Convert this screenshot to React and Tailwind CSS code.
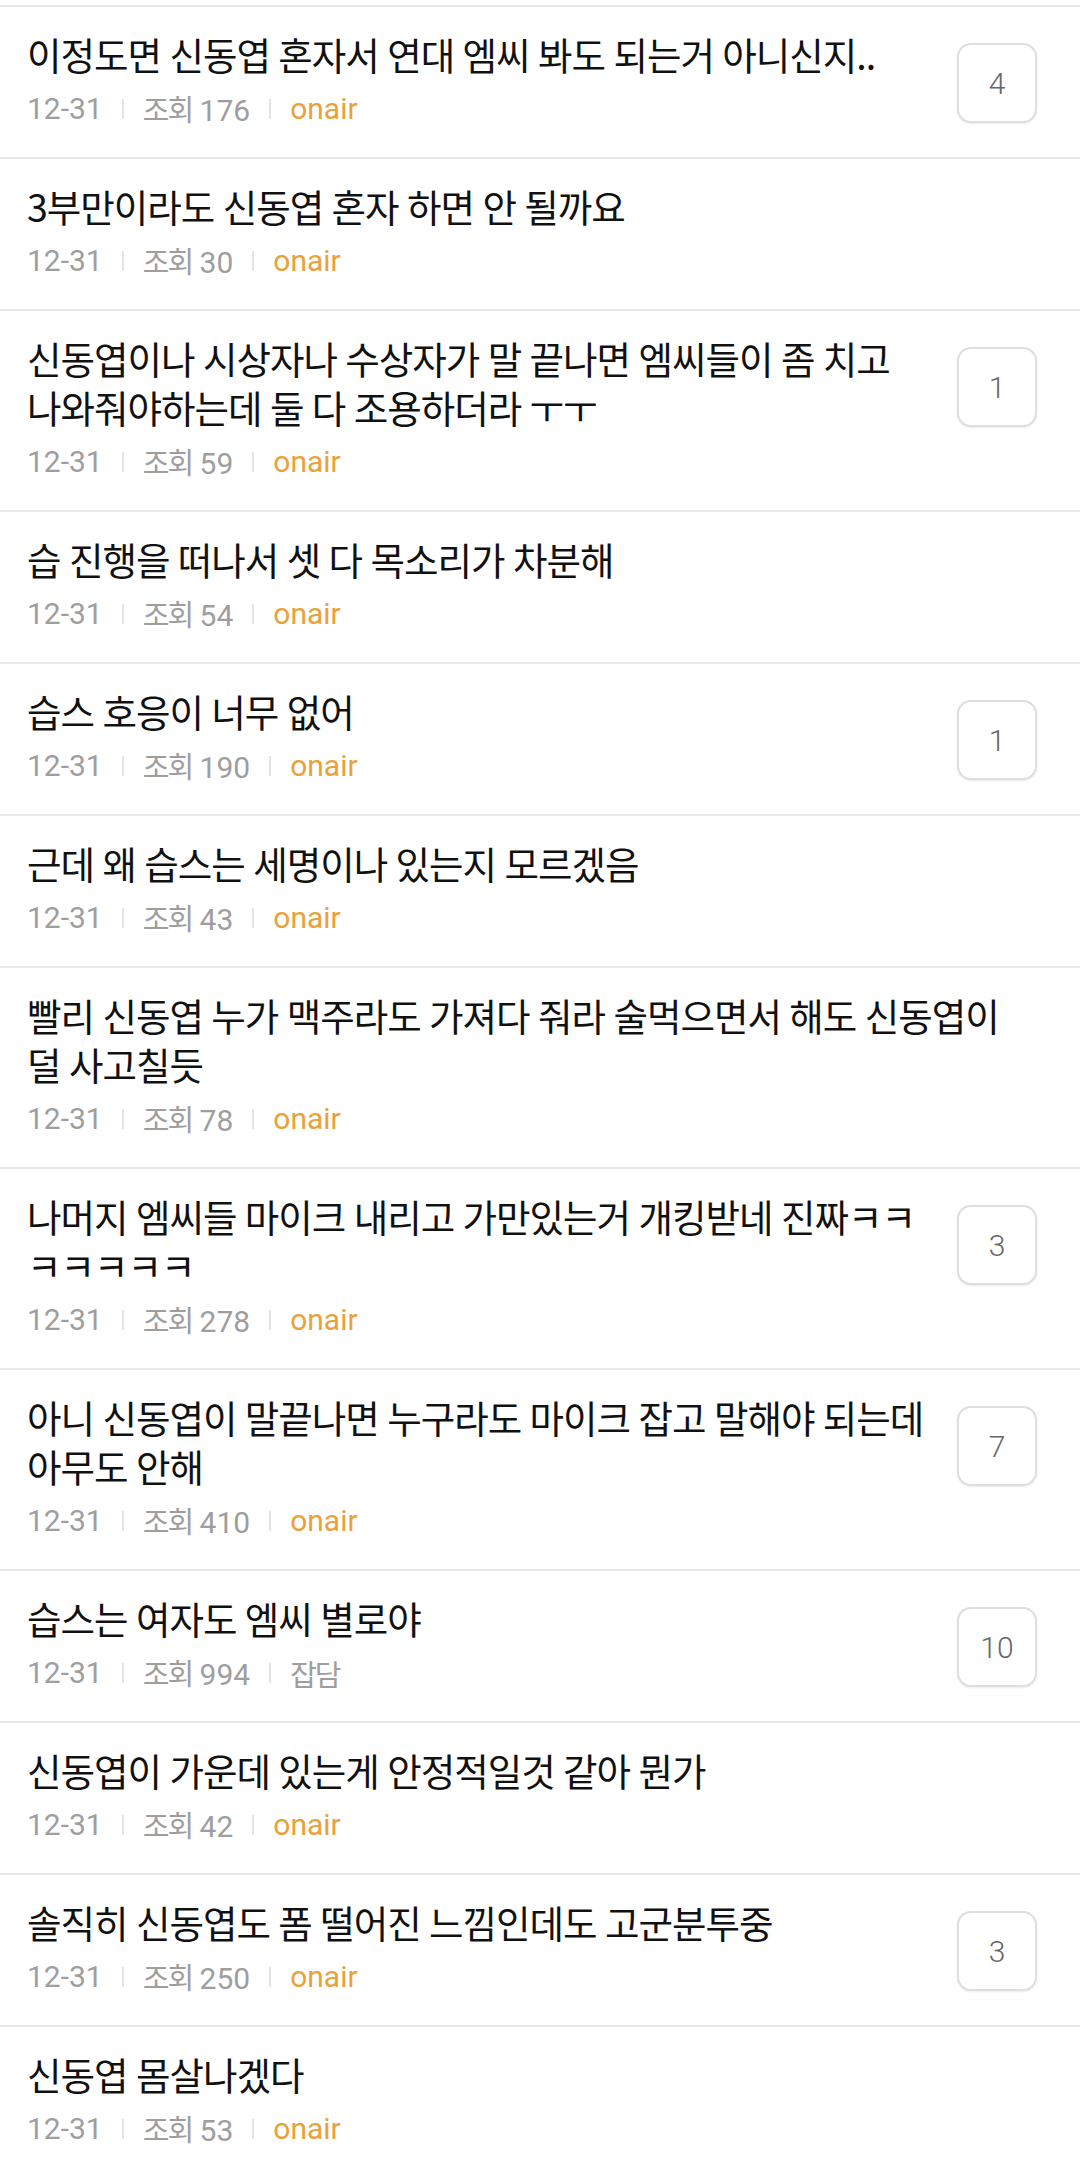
const items = [
  { title: "이정도면 신동엽 혼자서 연대 엠씨 봐도 되는거 아니신지..", views: 176, cat: "onair", badge: 4 },
  { title: "3부만이라도 신동엽 혼자 하면 안 될까요", views: 30, cat: "onair" },
  { title: "신동엽이나 시상자나 수상자가 말 끝나면 엠씨들이 좀 치고 나와줘야하는데 둘 다 조용하더라 ㅜㅜ", views: 59, cat: "onair", badge: 1 },
  { title: "습 진행을 떠나서 셋 다 목소리가 차분해", views: 54, cat: "onair" },
  { title: "습스 호응이 너무 없어", views: 190, cat: "onair", badge: 1 },
  { title: "근데 왜 습스는 세명이나 있는지 모르겠음", views: 43, cat: "onair" },
  { title: "빨리 신동엽 누가 맥주라도 가져다 줘라 술먹으면서 해도 신동엽이 덜 사고칠듯", views: 78, cat: "onair" },
  { title: "나머지 엠씨들 마이크 내리고 가만있는거 개킹받네 진짜ㅋㅋ\u200Bㅋㅋㅋㅋㅋ", views: 278, cat: "onair", badge: 3 },
  { title: "아니 신동엽이 말끝나면 누구라도 마이크 잡고 말해야 되는데 아무도 안해", views: 410, cat: "onair", badge: 7 },
  { title: "습스는 여자도 엠씨 별로야", views: 994, cat: "잡담", badge: 10 },
  { title: "신동엽이 가운데 있는게 안정적일것 같아 뭔가", views: 42, cat: "onair" },
  { title: "솔직히 신동엽도 폼 떨어진 느낌인데도 고군분투중", views: 250, cat: "onair", badge: 3 },
  { title: "신동엽 몸살나겠다", views: 53, cat: "onair" },
]

function Sep() {
  return <span className="h-[20px] w-[2px] shrink-0 bg-[#e4e4e4]"></span>
}

function Meta({ views, cat }) {
  return (
    <div className="mt-[13px] flex h-[36px] items-center gap-[19px] font-['Roboto','Noto_Sans_CJK_KR',sans-serif] text-[30px] leading-[36px] text-[#9e9e9e]">
      <span>12-31</span>
      <Sep />
      <span>
        <span className="font-['Noto_Sans_CJK_KR',sans-serif] text-[29px] tracking-[-2px]">조회</span> {views}
      </span>
      <Sep />
      {cat === "onair" ? (
        <span className="text-[#e9a23b]">onair</span>
      ) : (
        <span className="font-['Noto_Sans_CJK_KR',sans-serif] text-[29px] tracking-[-2px]">{cat}</span>
      )}
    </div>
  )
}

export default function App() {
  return (
    <div className="min-h-screen bg-white pt-[5px]">
      {items.map((it, i) => (
        <div key={i} className="flex items-start border-t-2 border-[#e8e8e8] pl-[27px] pr-[43px]">
          <div className="min-w-0 flex-1 pt-[22px] pb-[30px]">
            <p className="break-keep font-['Noto_Sans_CJK_KR',sans-serif] text-[37.5px] leading-[49px] tracking-[-1px] text-[#111] [word-spacing:1px]">
              {it.title}
            </p>
            <Meta views={it.views} cat={it.cat} />
          </div>
          {it.badge && (
            <div className="ml-[10px] mt-[36px] flex h-[80px] w-[80px] shrink-0 items-center justify-center rounded-[14px] border-2 border-[#dedede] bg-white font-['Roboto',sans-serif] text-[30px] font-light text-[#666] shadow-[0_1px_2px_rgba(0,0,0,0.08)]">
              {it.badge}
            </div>
          )}
        </div>
      ))}
    </div>
  )
}
